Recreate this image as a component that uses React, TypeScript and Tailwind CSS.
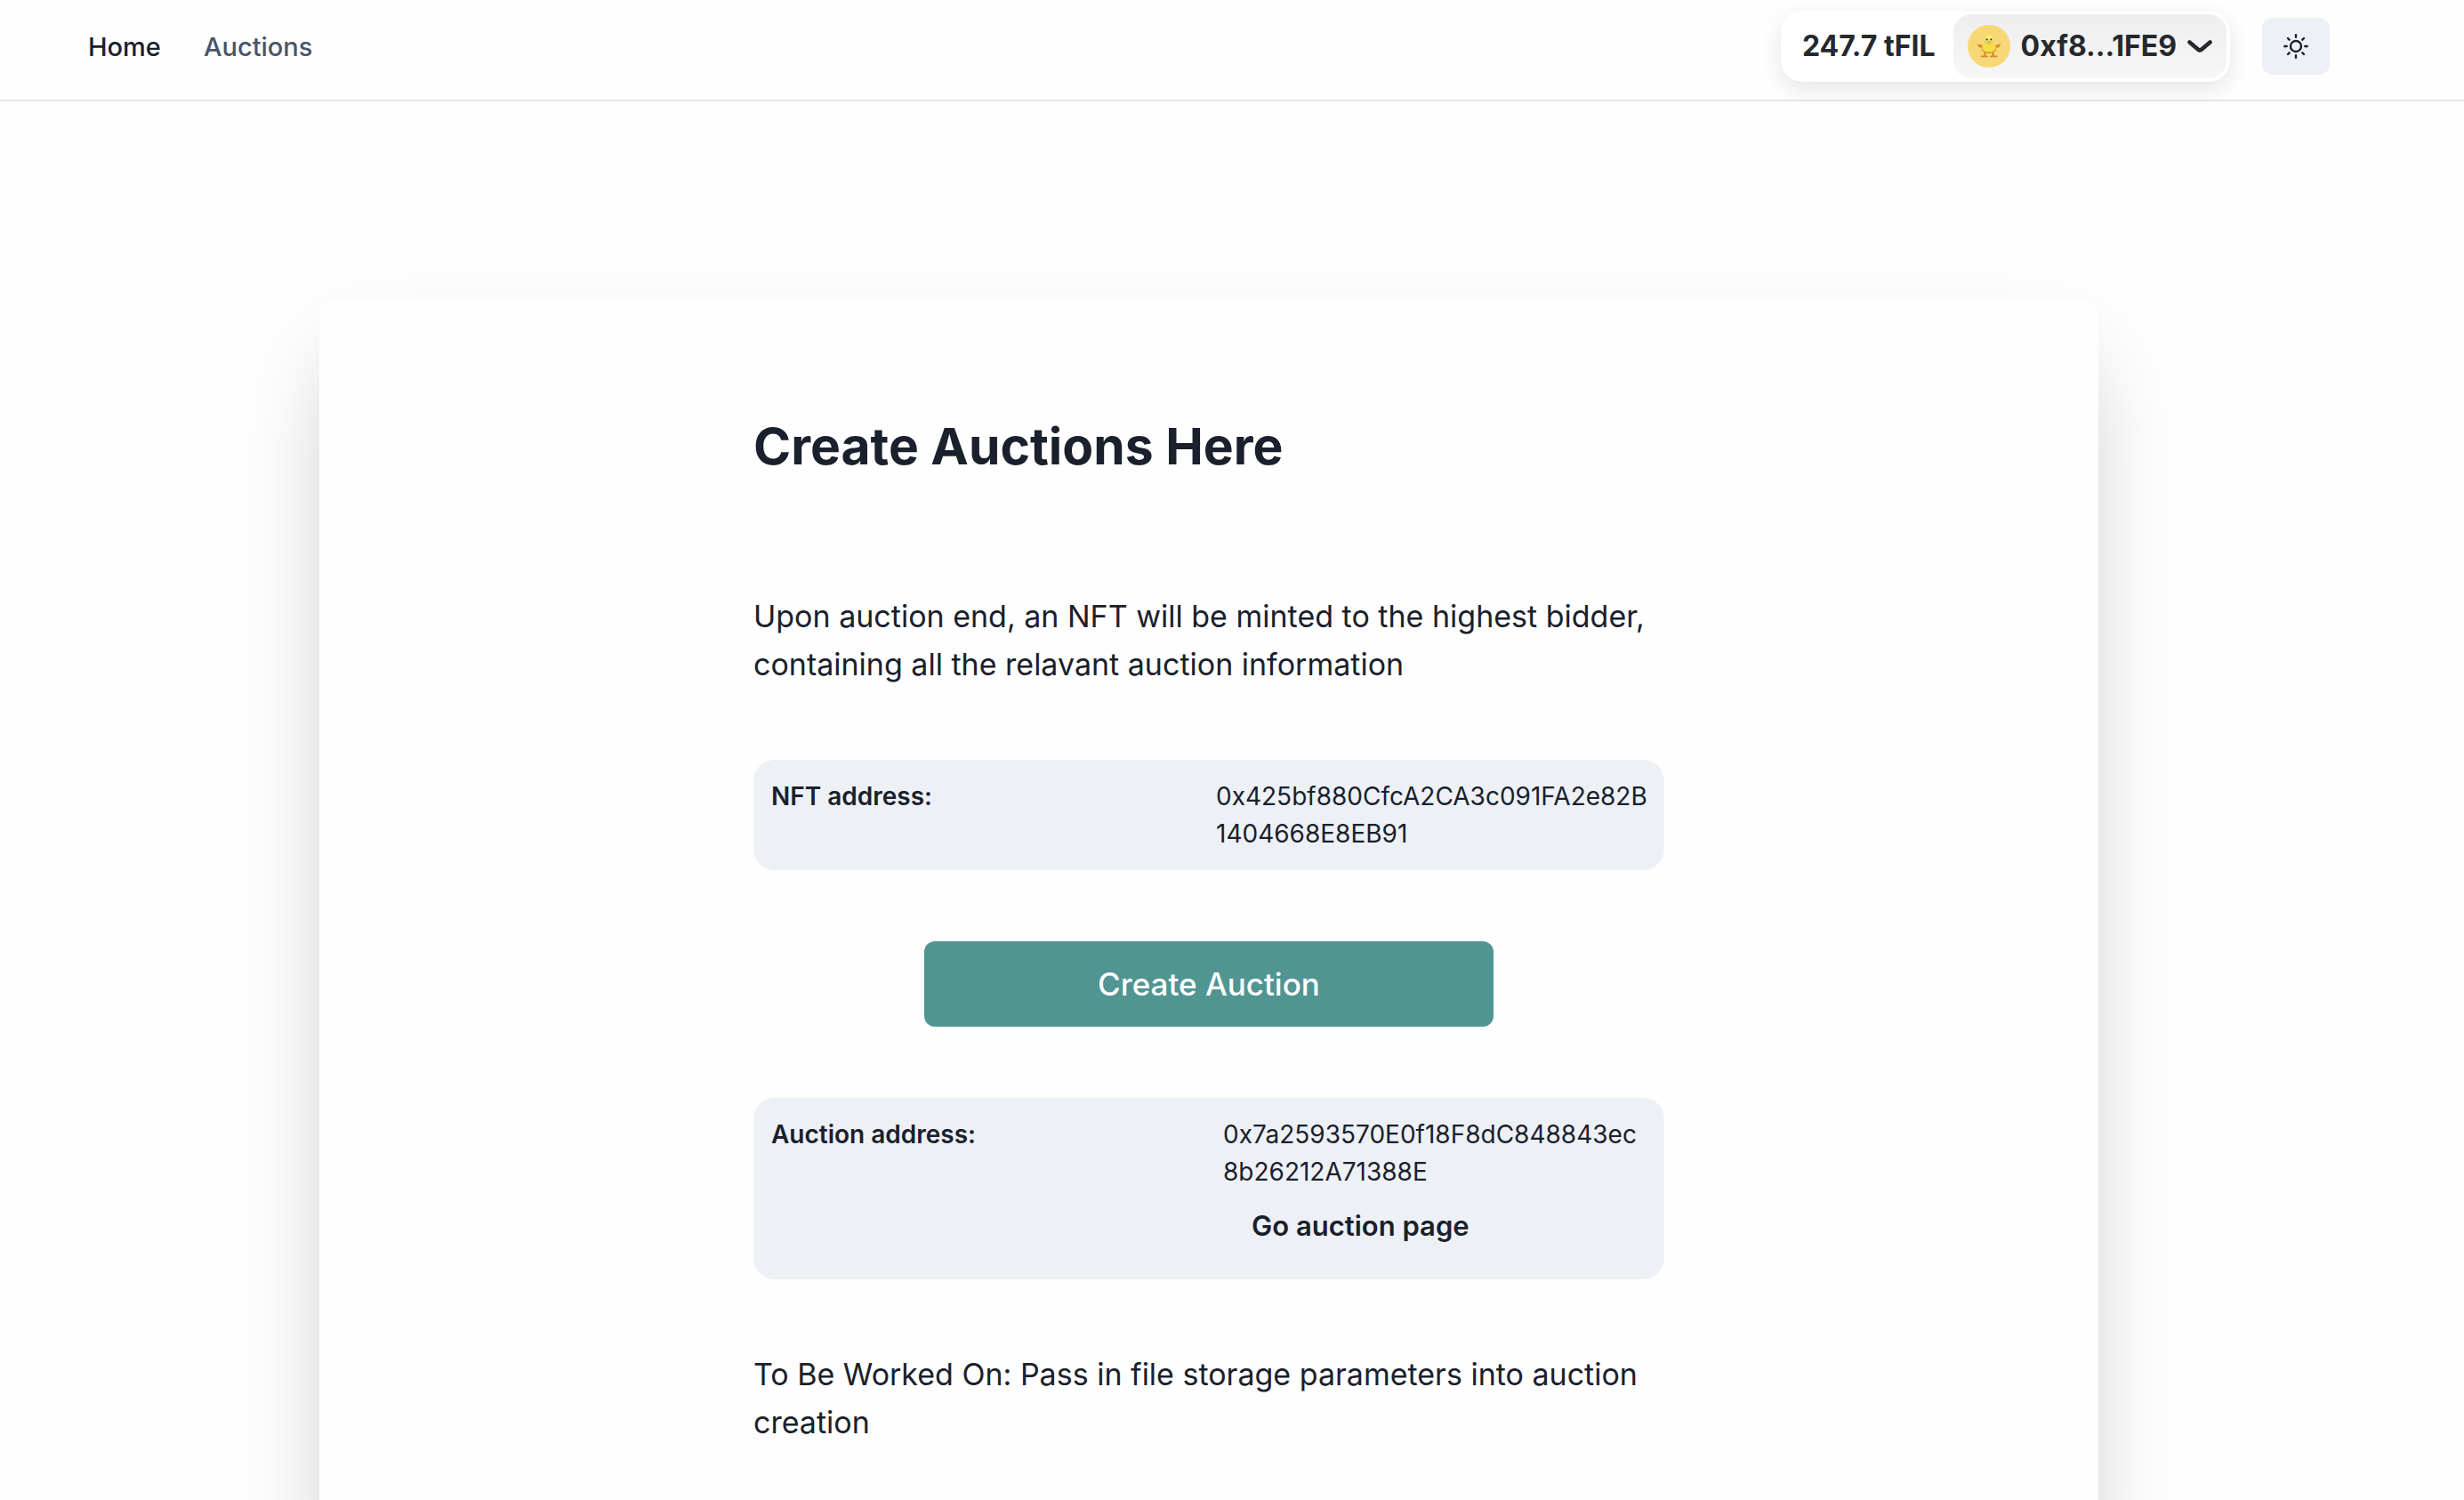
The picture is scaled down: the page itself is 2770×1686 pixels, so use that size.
import type { ReactNode } from "react";

function ChickIcon() {
  return (
    <svg viewBox="0 0 48 48" className="size-12" aria-hidden="true">
      <circle cx="24" cy="24" r="24" fill="#f8d874" />
      <path d="M19.500 31v4M28.500 31v4" stroke="#c9822f" strokeWidth="2" />
      <path d="M15.500 35.400h6.500M26 35.400h6.500" stroke="#cf8636" strokeWidth="1.800" strokeLinecap="round" />
      <path d="M19 22.500c-3 .4-5.200 0-8-.9.200 2 1.500 3.600 3.300 4l3.700.6zM29 22.500c3 .4 5.200 0 8-.9-.2 2-1.500 3.600-3.300 4l-3.700.6z" fill="#d18a30" />
      <ellipse cx="24" cy="26.200" rx="8.400" ry="6.200" fill="#d9a02a" />
      <ellipse cx="24" cy="25" rx="7.800" ry="5.600" fill="#f6de48" />
      <circle cx="24" cy="16" r="5.300" fill="#e6bd38" />
      <circle cx="24" cy="15.400" r="4.900" fill="#f9e968" />
      <circle cx="21.500" cy="16.300" r="1.700" fill="#fff" />
      <circle cx="26.500" cy="16.300" r="1.700" fill="#fff" />
      <circle cx="21.600" cy="16.400" r="1.200" fill="#34474c" />
      <circle cx="26.400" cy="16.400" r="1.200" fill="#34474c" />
      <path d="M22.500 18h3L24 20.600z" fill="#dd8a25" />
    </svg>
  );
}

function ChevronIcon() {
  return (
    <svg viewBox="0 0 28 14" fill="none" className="h-3.5 w-7" aria-hidden="true">
      <path d="M2.500 2.500 12 10.600q2 1.500 4 0L25.500 2.500" stroke="#25292e" strokeWidth="4.600" strokeLinecap="round" strokeLinejoin="round" />
    </svg>
  );
}

function SunIcon() {
  return (
    <svg viewBox="0 0 28 28" fill="none" stroke="#1a202c" strokeWidth="2.400" strokeLinecap="round" className="size-7" aria-hidden="true">
      <circle cx="14" cy="14" r="6" />
      <path d="M14 1.300v2.400M14 24.300v2.400M1.300 14h2.400M24.300 14h2.400M5 5l1.700 1.700M21.300 21.300 23 23M5 23l1.700-1.700M21.300 6.700 23 5" />
    </svg>
  );
}

type AddressCardProps = {
  label: string;
  address: string;
  columnClass: string;
  children?: ReactNode;
};

function AddressCard({ label, address, columnClass, children }: AddressCardProps) {
  return (
    <dl className="flex w-full justify-between rounded-3xl bg-[#edf1f6] py-5 pr-4 pl-5 text-[28px] leading-[42px]">
      <dt className="font-semibold">{label}</dt>
      <dd className={columnClass}>
        <p className="break-all">{address}</p>
        {children}
      </dd>
    </dl>
  );
}

export default function App() {
  return (
    <div className="h-screen overflow-hidden bg-[#fefefe] font-['Inter',sans-serif] text-[#1a202c]">
      <header className="border-b-2 border-[#e3e8ed]">
        <div className="flex items-center justify-between pt-3 pr-[151px] pb-5 pl-[99px]">
          <nav className="flex gap-12 pt-0.5 text-[29px] leading-10 font-medium">
            <a href="#home">Home</a>
            <a href="#auctions" className="text-[#4a5568]">Auctions</a>
          </nav>
          <div className="flex items-center gap-9">
            <div className="flex items-center rounded-3xl bg-white text-[32px] leading-10 font-bold text-[#25292e] shadow-[0_8px_24px_rgba(0,0,0,0.1)]">
              <span className="pr-4 pl-6">247.7 tFIL</span>
              <button type="button" className="flex h-20 items-center gap-3 rounded-3xl border-4 border-white bg-gradient-to-b from-[#eeeeee] to-[#f7f7f7] bg-clip-padding px-4">
                <ChickIcon />
                <span>0xf8...1FE9</span>
                <ChevronIcon />
              </button>
            </div>
            <button type="button" aria-label="Toggle color mode" className="flex h-16 w-[76px] items-center justify-center rounded-xl bg-[#edf1f6]">
              <SunIcon />
            </button>
          </div>
        </div>
      </header>

      <main className="flex justify-center pt-56 pr-[52px]">
        <section className="flex w-full max-w-[2000px] justify-center rounded-xl bg-[#fefefe] py-32 shadow-[0_50px_100px_-24px_rgba(0,0,0,0.25)]">
          <div className="flex w-full max-w-[1024px] flex-col items-center gap-20">
            <h1 className="mb-12 w-full text-[57px] leading-[72px] font-bold">Create Auctions Here</h1>
            <p className="w-full text-[34px] leading-[54px]">
              Upon auction end, an NFT will be minted to the highest bidder, containing all the relavant auction information
            </p>
            <AddressCard
              label="NFT address:"
              address="0x425bf880CfcA2CA3c091FA2e82B1404668E8EB91"
              columnClass="w-[488px]"
            />
            <button type="button" className="h-24 w-[640px] rounded-xl bg-[#519593] text-[35px] font-medium text-white">
              Create Auction
            </button>
            <AddressCard
              label="Auction address:"
              address="0x7a2593570E0f18F8dC848843ec8b26212A71388E"
              columnClass="w-[480px]"
            >
              <a href="#auction-page" className="flex h-20 w-fit items-center px-8 text-[31px] font-semibold">
                Go auction page
              </a>
            </AddressCard>
            <p className="w-full text-[34px] leading-[54px]">
              To Be Worked On: Pass in file storage parameters into auction creation
            </p>
          </div>
        </section>
      </main>
    </div>
  );
}
